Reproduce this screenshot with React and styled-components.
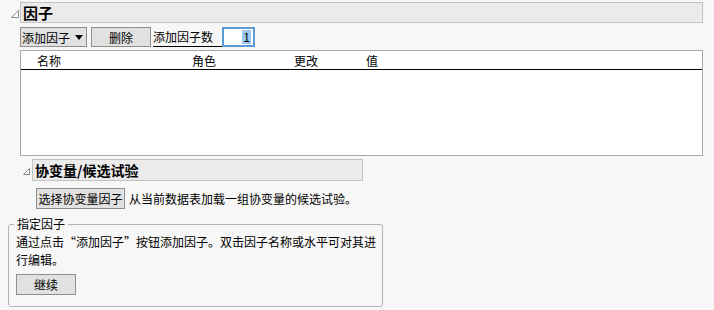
import styled, { createGlobalStyle } from "styled-components"

const GlobalStyle = createGlobalStyle`
  body {
    margin: 0;
    background: #f7f7f7;
    font-family: "Noto Sans CJK SC", "Liberation Sans", sans-serif;
    font-size: 12px;
    color: #000;
  }
`

const Page = styled.div`
  width: 714px;
  height: 310px;
  padding: 2px 11px 0 10px;
  box-sizing: border-box;
  overflow: hidden;
`

const Outline = styled.div`
  display: flex;
  flex-direction: column;
  margin-left: ${({ $indent }) => $indent || 0}px;
  width: ${({ $width }) => ($width ? `${$width}px` : "auto")};
`

const TitleRow = styled.div`
  display: flex;
  align-items: center;
  margin-top: ${({ $top }) => $top || 0}px;
`

const Toggle = styled.svg`
  width: 10px;
  height: 10px;
  flex: none;
  margin-top: ${({ $small }) => ($small ? 3 : 4)}px;
`

const TitleBar = styled.div`
  flex: 1;
  height: ${({ $small }) => ($small ? 20 : 19)}px;
  display: flex;
  align-items: center;
  padding-left: 2px;
  background: #ebebeb;
  border: 1px solid #c2c2c2;
  font-weight: bold;
  font-size: ${({ $small }) => ($small ? 14 : 15)}px;
`

const OutlineBody = styled.div`
  padding-left: ${({ $pad }) => $pad || 10}px;
  display: flex;
  flex-direction: column;
`

const Toolbar = styled.div`
  display: flex;
  align-items: center;
  gap: 4px;
  margin-top: 4px;
  height: 20px;
`

const Button = styled.button`
  height: ${({ $h }) => $h || 20}px;
  width: ${({ $w }) => $w}px;
  padding: 0 1px;
  box-sizing: border-box;
  display: flex;
  align-items: center;
  justify-content: ${({ $left }) => ($left ? "flex-start" : "center")};
  gap: 5px;
  white-space: nowrap;
  background: #e1e1e1;
  border: 1px solid #8f8f8f;
  border-radius: 0;
  font-family: inherit;
  font-size: 12px;
  color: #000;
`

const Caret = styled.span`
  width: 0;
  height: 0;
  border-left: 4px solid transparent;
  border-right: 4px solid transparent;
  border-top: 5px solid #000;
`

const Label = styled.span`
  height: 20px;
  display: flex;
  align-items: center;
  padding-right: 9px;
  margin-left: -2px;
  border-bottom: 1px solid #000;
  box-sizing: border-box;
`

const NumberBox = styled.div`
  width: 33px;
  height: 20px;
  margin-left: -4px;
  box-sizing: border-box;
  border: 2px solid #5b9bd5;
  background: #fff;
  display: flex;
  align-items: center;
  justify-content: flex-end;
  padding-right: 2px;

  span {
    background: #99c9ef;
    padding: 0 1px;
    line-height: 14px;
  }
`

const Table = styled.div`
  margin-top: 3px;
  height: 106px;
  box-sizing: border-box;
  background: #fff;
  border: 1px solid #a8a8a8;
`

const TableHead = styled.div`
  display: grid;
  grid-template-columns: 155px 102px 72px 1fr;
  padding-left: 16px;
  height: 18px;
  align-items: center;
  border-bottom: 1px solid #000;
`

const Row = styled.div`
  display: flex;
  align-items: center;
  gap: 4px;
  margin-top: ${({ $top }) => $top || 0}px;
`

const GroupBox = styled.fieldset`
  margin: 8px 0 0 -2px;
  width: 375px;
  box-sizing: border-box;
  border: 1px solid #b4b4b4;
  border-radius: 3px;
  padding: 0 6px 11px 7px;
  display: flex;
  flex-direction: column;

  legend {
    padding: 0 3px;
    margin-left: -2px;
    line-height: 14px;
  }
`

const Para = styled.p`
  margin: 2px 0 0 0;
  line-height: 18px;
`

const TriangleIcon = ({ small }) => (
  <Toggle viewBox="0 0 10 10" $small={small}>
    {small ? (
      <polygon points="7.5,1.5 7.5,7.5 1.5,7.5" fill="#fff" stroke="#8a8a8a" strokeWidth="1" />
    ) : (
      <polygon points="8.5,0.5 8.5,7.5 1.5,7.5" fill="#fff" stroke="#8a8a8a" strokeWidth="1" />
    )}
  </Toggle>
)

export default function App() {
  return (
    <>
      <GlobalStyle />
      <Page>
        <Outline>
          <TitleRow>
            <TriangleIcon />
            <TitleBar>因子</TitleBar>
          </TitleRow>
          <OutlineBody $pad={10}>
            <Toolbar>
              <Button $w={67} $left>
                添加因子 <Caret />
              </Button>
              <Button $w={60}>删除</Button>
              <Label>添加因子数</Label>
              <NumberBox>
                <span>1</span>
              </NumberBox>
            </Toolbar>
            <Table>
              <TableHead>
                <span>名称</span>
                <span>角色</span>
                <span>更改</span>
                <span>值</span>
              </TableHead>
            </Table>
            <Outline $indent={2} $width={341}>
              <TitleRow $top={3}>
                <TriangleIcon small />
                <TitleBar $small>协变量/候选试验</TitleBar>
              </TitleRow>
              <OutlineBody $pad={14}>
                <Row $top={7}>
                  <Button $w={89} $h={21}>选择协变量因子</Button>
                  <span>从当前数据表加载一组协变量的候选试验。</span>
                </Row>
              </OutlineBody>
            </Outline>
          </OutlineBody>
        </Outline>
        <GroupBox>
          <legend>指定因子</legend>
          <Para>通过点击“添加因子”按钮添加因子。双击因子名称或水平可对其进行编辑。</Para>
          <Row $top={5}>
            <Button $w={60} $h={21}>继续</Button>
          </Row>
        </GroupBox>
      </Page>
    </>
  )
}
